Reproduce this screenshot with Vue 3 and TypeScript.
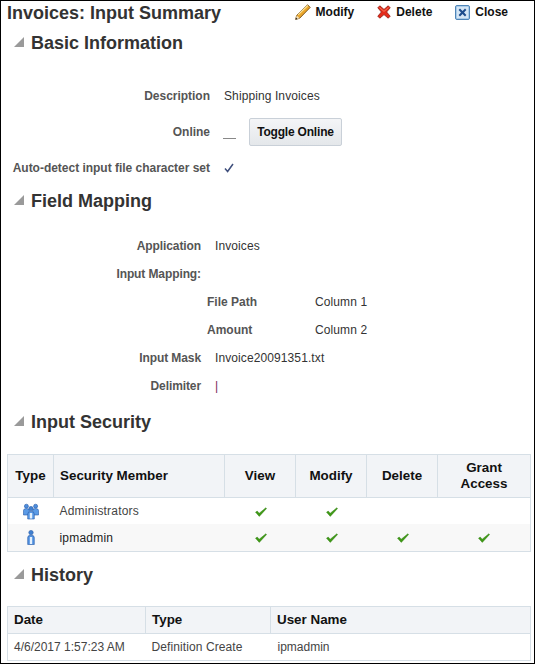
<script setup lang="ts">
interface Perm { name: string; group: boolean; view: boolean; modify: boolean; del: boolean; grant: boolean }
const perms: Perm[] = [
  { name: 'Administrators', group: true, view: true, modify: true, del: false, grant: false },
  { name: 'ipmadmin', group: false, view: true, modify: true, del: true, grant: true },
]
</script>

<template>
  <div class="page">
    <header class="top">
      <h1>Invoices: Input Summary</h1>
      <div class="actions">
        <span class="action modify">
          <svg width="16" height="16" viewBox="0 0 16 16">
            <path d="M0.600 15.400l1.100-4L12.600 0.800l2.600 2.600L4.600 14.300z" fill="#e9a52c" stroke="#6f4a12" stroke-width="0.900" stroke-linejoin="round"/>
            <path d="M3 10.900L12.800 1.500" stroke="#fde69a" stroke-width="1.100" fill="none"/>
            <path d="M1.700 11.400l2.900 2.900-4 1.100z" fill="#f5e2bb"/>
            <path d="M0.600 15.400l.5-1.900 1.400 1.400z" fill="#222"/>
          </svg>
          Modify
        </span>
        <span class="action delete">
          <svg width="14" height="14" viewBox="0 0 14 14">
            <path d="M0.800 2.800l2-2L7 4.400 11.200 0.800l2 2L9.600 7l3.600 4.200-2 2L7 9.600 2.800 13.200l-2-2L4.400 7z" fill="#e52a1a" stroke="#8e1a10" stroke-width="0.800" stroke-linejoin="round"/>
            <path d="M2.500 2.500L7 6.400 11.500 2.500" fill="none" stroke="#f98a6a" stroke-width="0.800"/>
          </svg>
          Delete
        </span>
        <span class="action close">
          <svg width="15" height="15" viewBox="0 0 15 15">
            <rect x="0.500" y="0.500" width="14" height="14" rx="1.500" fill="#a9cbe9" stroke="#4f85b8"/>
            <rect x="2" y="2" width="11" height="11" fill="#d5e6f5"/>
            <path d="M3.600 5l1.400-1.400 2.500 2.300L10 3.600 11.400 5 9 7.500l2.400 2.500-1.400 1.400-2.500-2.300L5 11.400 3.600 10 6 7.500z" fill="#1d4c8c"/>
          </svg>
          Close
        </span>
      </div>
    </header>

    <h2 class="sec first"><i class="tri"></i>Basic Information</h2>
    <div class="form basic">
      <div class="row"><span class="lbl">Description</span><span class="val">Shipping Invoices</span></div>
      <div class="row">
        <span class="lbl">Online</span>
        <span class="val online"><span class="dash"></span><button class="btn" type="button">Toggle Online</button></span>
      </div>
      <div class="row">
        <span class="lbl">Auto-detect input file character set</span>
        <span class="val">
          <svg class="tick" width="10" height="10" viewBox="0 0 10 10"><path d="M1 5.500L3.600 8.500L9 1" fill="none" stroke="#3f4f7c" stroke-width="1.500"/></svg>
        </span>
      </div>
    </div>

    <h2 class="sec"><i class="tri"></i>Field Mapping</h2>
    <div class="form mapping">
      <div class="row"><span class="lbl">Application</span><span class="val">Invoices</span></div>
      <div class="row"><span class="lbl">Input Mapping:</span><span class="val"></span></div>
      <div class="row nested"><span class="lbl">File Path</span><span class="val">Column 1</span></div>
      <div class="row nested"><span class="lbl">Amount</span><span class="val">Column 2</span></div>
      <div class="row"><span class="lbl">Input Mask</span><span class="val">Invoice20091351.txt</span></div>
      <div class="row"><span class="lbl">Delimiter</span><span class="val pipe">|</span></div>
    </div>

    <h2 class="sec security"><i class="tri"></i>Input Security</h2>
    <table class="grid sec-table">
      <colgroup>
        <col class="w-type" /><col class="w-member" /><col class="w-perm" /><col class="w-perm" /><col class="w-perm" /><col />
      </colgroup>
      <thead>
        <tr class="tall">
          <th class="c">Type</th><th class="l">Security Member</th><th class="c">View</th><th class="c">Modify</th><th class="c">Delete</th><th class="c">Grant<br />Access</th>
        </tr>
      </thead>
      <tbody>
        <tr v-for="p in perms" :key="p.name">
          <td class="c icon">
            <svg v-if="p.group" width="16" height="17" viewBox="0 0 16 17">
              <g stroke="#2a5ca8" stroke-width="0.600">
                <circle cx="3.400" cy="3.200" r="2" fill="#4d8ede"/><circle cx="12.600" cy="3.200" r="2" fill="#4d8ede"/>
                <path d="M0.500 12V7.500q0-2 2.900-2t2.900 2V12z" fill="#5b9be6"/>
                <path d="M9.700 12V7.500q0-2 2.900-2t2.900 2V12z" fill="#5b9be6"/>
                <circle cx="8" cy="5.600" r="2.200" fill="#3f7fd0"/>
                <path d="M4.700 16V11.200Q4.700 8.400 8 8.400t3.300 2.800V16z" fill="#5b9be6"/>
              </g>
              <path d="M6.800 10h2.400v5.500H6.800z" fill="#e4f0fc"/>
            </svg>
            <svg v-else class="person" width="8" height="15" viewBox="0 0 8 15">
              <circle cx="4" cy="2.600" r="2.200" fill="#3f7fd0" stroke="#2a5ca8" stroke-width="0.600"/>
              <path d="M0.700 14.500V7.500Q0.700 5.200 4 5.200t3.300 2.300v7z" fill="#4f90e0" stroke="#2a5ca8" stroke-width="0.600"/>
              <path d="M2.800 7h2.400v7H2.800z" fill="#e4f0fc"/>
            </svg>
          </td>
          <td class="l name">{{ p.name }}</td>
          <td v-for="(on, i) in [p.view, p.modify, p.del, p.grant]" :key="i" class="c">
            <svg v-if="on" class="check" :class="{ last: i === 3 }" width="12" height="10" viewBox="0 0 12 10">
              <path d="M0.500 5.200L2.200 4l2 2.200L10.800 0.800l.8.700L4.300 9.400z" fill="#3f9a16" stroke="#2a7a0c" stroke-width="0.400"/>
            </svg>
          </td>
        </tr>
      </tbody>
    </table>

    <h2 class="sec history"><i class="tri"></i>History</h2>
    <table class="grid hist-table">
      <colgroup><col class="w-date" /><col class="w-kind" /><col /></colgroup>
      <thead>
        <tr><th class="l">Date</th><th class="l">Type</th><th class="l">User Name</th></tr>
      </thead>
      <tbody>
        <tr><td class="l">4/6/2017 1:57:23 AM</td><td class="l kind">Definition Create</td><td class="l user">ipmadmin</td></tr>
      </tbody>
    </table>
  </div>
</template>

<style>
html, body { margin: 0; padding: 0; background: #fff; }
</style>

<style scoped>
.page {
  box-sizing: border-box;
  width: 535px;
  height: 664px;
  border: 1px solid #000;
  background: #fff;
  overflow: hidden;
  font-family: "Liberation Sans", Arial, sans-serif;
  font-size: 12px;
  color: #333;
}
.top {
  display: flex;
  align-items: center;
  justify-content: space-between;
  height: 24px;
  padding: 0 26px 0 6px;
}
h1 {
  margin: 0;
  font-size: 18px;
  font-weight: bold;
  color: #333;
  line-height: 24px;
}
.actions { display: flex; align-items: center; gap: 23px; }
.action {
  display: inline-flex;
  align-items: center;
  gap: 5px;
  font-size: 12px;
  font-weight: bold;
  color: #111;
  margin-top: -2px;
}
.sec {
  display: flex;
  align-items: center;
  margin: 0;
  height: 24px;
  padding-left: 13px;
  font-size: 18px;
  font-weight: bold;
  color: #333;
  line-height: 24px;
}
.tri {
  width: 0;
  height: 0;
  margin-right: 7px;
  margin-top: -3px;
  border-bottom: 10px solid #9a9a9a;
  border-left: 10px solid transparent;
}
.first { margin-top: 6px; }
.form { display: flex; flex-direction: column; }
.row { display: flex; align-items: center; height: 28px; }
.lbl { font-weight: bold; color: #555; text-align: right; flex: none; white-space: nowrap; }
.val { margin-left: 14px; color: #333; letter-spacing: 0.1px; }
.basic { margin-top: 23px; }
.basic .row { height: 36px; }
.basic .lbl { width: 209px; letter-spacing: -0.02px; }
.online { display: flex; align-items: center; margin-left: 13px; }
.dash { width: 13px; height: 1px; background: #888; margin-top: 13px; margin-right: 13px; }
.btn {
  box-sizing: border-box;
  width: 93px;
  height: 28px;
  padding: 0;
  border: 1px solid #c9d0d8;
  border-radius: 2px;
  background: linear-gradient(#f4f5f7, #e4e7ea);
  font-family: inherit;
  font-size: 12px;
  font-weight: bold;
  letter-spacing: -0.2px;
  color: #111;
}
.tick { display: block; }
.form.basic + .sec { margin-top: 3px; }
.mapping { margin-top: 19px; }
.mapping .lbl { width: 200px; letter-spacing: -0.1px; }
.mapping .nested .lbl { width: 48px; margin-left: 206px; text-align: left; letter-spacing: 0; }
.mapping .nested .val { margin-left: 60px; }
.pipe { color: #7a2a5a; }
.security { margin-top: 10px; }
.grid {
  box-sizing: border-box;
  width: 524px;
  margin-left: 6px;
  table-layout: fixed;
  border-collapse: collapse;
  border: 1px solid #d6dfe6;
}
.w-type { width: 46px; }
.w-member { width: 171px; }
.w-perm { width: 71px; }
.w-date { width: 138px; }
.w-kind { width: 125px; }
.grid th {
  background: #f2f4f7;
  border: 1px solid #d6dfe6;
  border-width: 0 1px 1px 0;
  color: #111;
  font-size: 13.400px;
  font-weight: bold;
  padding: 0;
  line-height: 16px;
}
.grid th.c, .grid td.c { text-align: center; }
.grid th.l, .grid td.l { text-align: left; padding-left: 6px; }
.grid td { padding: 0; height: 26px; color: #444; }
.name { letter-spacing: 0.2px; }
.kind { letter-spacing: 0.1px; }
.sec-table { margin-top: 20px; }
.tall { height: 43px; }
.sec-table tbody tr:nth-child(even) td { background: #f8f8f8; color: #222; height: 27px; }
.icon svg, .check { display: inline-block; vertical-align: middle; }
.check { margin-left: 2px; }
.check.last { margin-left: 0; }
.history { margin-top: 11px; }
.hist-table { margin-top: 19px; }
.hist-table th { height: 26px; }
.hist-table td { height: 26px; }
.hist-table td.user { padding-left: 7px; }
</style>
